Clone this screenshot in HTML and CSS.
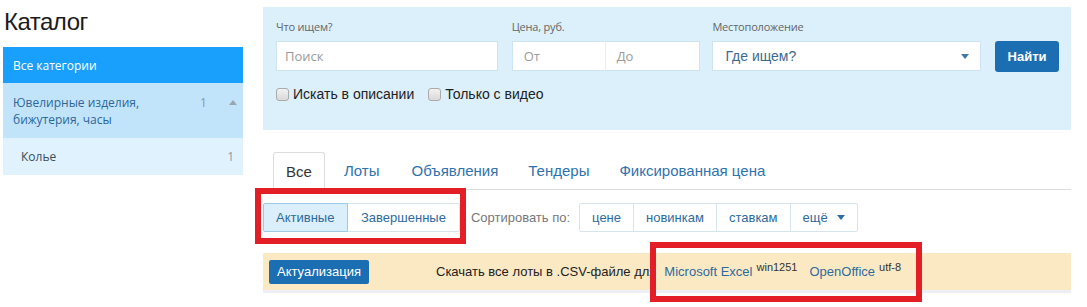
FILE: index.html
```html
<!DOCTYPE html>
<html lang="ru">
<head>
<meta charset="utf-8">
<title>Каталог</title>
<link rel="stylesheet" href="styles.css">
</head>
<body>
<div class="page">
  <aside class="sidebar">
    <h1 class="title">Каталог</h1>
    <ul class="cats">
      <li class="cat cat-all">Все категории</li>
      <li class="cat cat-parent">
        <span class="cat-name">Ювелирные изделия, бижутерия, часы</span>
        <span class="cat-count">1</span>
        <span class="cat-toggle"></span>
      </li>
      <li class="cat cat-child">
        <span class="cat-name">Колье</span>
        <span class="cat-count">1</span>
      </li>
    </ul>
  </aside>

  <main class="main">
    <form class="search">
      <div class="search-fields">
        <div class="field field-query">
          <label class="field-label">Что ищем?</label>
          <div class="input"><span class="ph">Поиск</span></div>
        </div>
        <div class="field field-price">
          <label class="field-label">Цена, руб.</label>
          <div class="price-pair">
            <div class="input"><span class="ph">От</span></div>
            <div class="input input-to"><span class="ph">До</span></div>
          </div>
        </div>
        <div class="field field-loc">
          <label class="field-label">Местоположение</label>
          <div class="input select"><span class="sel-text">Где ищем?</span><span class="caret"></span></div>
        </div>
        <div class="field field-btn">
          <button type="button" class="btn-find">Найти</button>
        </div>
      </div>
      <div class="checks">
        <label class="check"><span class="box"></span>Искать в описании</label>
        <label class="check"><span class="box"></span>Только с видео</label>
      </div>
    </form>

    <nav class="tabs">
      <span class="tab tab-active">Все</span>
      <span class="tab">Лоты</span>
      <span class="tab tab-ads">Объявления</span>
      <span class="tab">Тендеры</span>
      <span class="tab">Фиксированная цена</span>
    </nav>

    <div class="filters">
      <div class="group">
        <span class="gbtn gbtn-active">Активные</span>
        <span class="gbtn">Завершенные</span>
      </div>
      <span class="sort-label">Сортировать по:</span>
      <div class="group sort">
        <span class="gbtn">цене</span>
        <span class="gbtn">новинкам</span>
        <span class="gbtn">ставкам</span>
        <span class="gbtn">ещё <span class="caret caret-more"></span></span>
      </div>
    </div>

    <div class="csvbar">
      <button type="button" class="btn-upd">Актуализация</button>
      <span class="csv-text">Скачать все лоты в .CSV-файле для</span>
      <a class="csv-link">Microsoft Excel</a><sup class="enc">win1251</sup>
      <a class="csv-link csv-link2">OpenOffice</a><sup class="enc">utf-8</sup>
    </div>

    <div class="mark mark-filter"></div>
    <div class="mark mark-csv"></div>
  </main>
</div>
</body>
</html>
```

FILE: styles.css
```css
* { box-sizing: border-box; }
html, body { margin: 0; padding: 0; background: #fff; }
body {
  font-family: "Liberation Sans", Arial, sans-serif;
  color: #333;
  width: 1087px;
  height: 307px;
  overflow: hidden;
}
.page {
  display: flex;
  padding-left: 3px;
  gap: 20px;
}

/* sidebar */
.sidebar { width: 240px; flex: none; }
.title {
  margin: 8px 0 11px 1px;
  font: 400 24px/28px "Liberation Sans", Arial, sans-serif;
  letter-spacing: -0.5px;
  color: #1b1b1b;
}
.cats { list-style: none; margin: 0; padding: 0; font-family: "Open Sans", "Noto Sans", sans-serif; font-size: 12px; }
.cat { display: flex; align-items: center; }
.cat-all {
  height: 36px;
  background: #199ffc;
  color: #fff;
  padding-left: 10px;
}
.cat-parent {
  background: #c2e4fb;
  color: #2c6797;
  height: 55px;
  padding: 0 0 0 10px;
  align-items: flex-start;
  padding-top: 11px;
  line-height: 17px;
}
.cat-parent .cat-name { width: 150px; }
.cat-parent .cat-count { margin-left: 37px; color: #8a9aa6; }
.cat-toggle {
  margin-left: 22px;
  margin-top: 6px;
  width: 0; height: 0;
  border-left: 4px solid transparent;
  border-right: 4px solid transparent;
  border-bottom: 5px solid #9aa5ad;
}
.cat-child {
  background: #e0f2fd;
  color: #3b4d5c;
  height: 37px;
  padding-left: 18px;
}
.cat-child .cat-name { flex: 1; }
.cat-child .cat-count { margin-right: 9px; color: #8a9aa6; }

/* main */
.main { width: 808px; flex: none; position: relative; }

.search {
  margin-top: 7px;
  height: 123px;
  background: #dcf0fb;
  padding: 13px 12px 0 13px;
}
.search-fields { display: flex; align-items: flex-end; }
.field { display: flex; flex-direction: column; }
.field-label {
  font: 11px/14px "Open Sans", "Noto Sans", sans-serif;
  color: #666;
  margin-bottom: 7px;
  letter-spacing: -0.2px;
}
.input {
  height: 30px;
  background: #fff;
  border: 1px solid #cfe3ef;
  display: flex;
  align-items: center;
  padding-left: 8px;
  font: 13px "Open Sans", "Noto Sans", sans-serif;
}
.ph { color: #9a9a9a; }
.field-query { width: 222px; }
.field-price { margin-left: 14px; width: 189px; }
.price-pair { display: flex; }
.price-pair .input { width: 94px; padding-left: 11px; }
.price-pair .input-to { width: 95px; border-left: 1px solid #e3eef5; margin-left: -1px; }
.field-loc { margin-left: 12px; width: 269px; }
.select { padding-left: 12px; padding-right: 11px; justify-content: space-between; }
.sel-text { font: 14px "Liberation Sans", Arial, sans-serif; color: #3b6a90; }
.caret {
  display: inline-block;
  width: 0; height: 0;
  border-left: 4px solid transparent;
  border-right: 4px solid transparent;
  border-top: 5px solid #3f77a6;
}
.field-btn { margin-left: 14px; }
.btn-find {
  height: 31px;
  width: 64px;
  margin-bottom: -1px;
  border: 0;
  border-radius: 3px;
  background: #1b6eb1;
  color: #fff;
  font: bold 13px "Liberation Sans", Arial, sans-serif;
  padding: 0;
}

.checks { display: flex; gap: 14px; margin-top: 14px; }
.check {
  display: flex;
  align-items: center;
  font-size: 14px;
  line-height: 18px;
  color: #222;
}
.box {
  width: 13px; height: 13px;
  border: 1px solid #ababab;
  border-radius: 3px;
  background: linear-gradient(#f2f2f2, #d9d9d9);
  margin-right: 4px;
}

/* tabs */
.tabs {
  display: flex;
  margin-top: 22px;
  padding-left: 10px;
  border-bottom: 1px solid #ddd;
  height: 38px;
}
.tab {
  padding: 0 15px;
  margin-right: 0;
  font-size: 15px;
  line-height: 37px;
  color: #2f73ad;
}
.tab-ads { padding-left: 17px; }
.tab-active {
  color: #333;
  border: 1px solid #ddd;
  border-bottom-color: #fff;
  border-radius: 3px 3px 0 0;
  height: 38px;
  width: 52px;
  padding: 0;
  text-align: center;
  margin-right: 4px;
}

/* filters */
.filters {
  display: flex;
  align-items: center;
  margin-top: 13px;
  height: 29px;
}
.group { display: flex; height: 29px; }
.gbtn {
  display: flex;
  align-items: center;
  gap: 9px;
  padding: 0 12px;
  border: 1px solid #d6e4ee;
  margin-left: -1px;
  font-size: 13px;
  color: #2e6b9c;
  background: #fff;
}
.gbtn:first-child { margin-left: 0; border-radius: 2px 0 0 2px; }
.gbtn:last-child { border-radius: 0 2px 2px 0; }
.gbtn-active {
  background: #dbeefb;
  border-color: #9ccbe8;
  position: relative;
  z-index: 1;
  width: 85px;
}
.group .gbtn:nth-child(2) { padding: 0 13px; }
.sort-label { margin-left: 11px; margin-right: 9px; font-size: 13px; color: #777; }
.sort .gbtn { padding: 0 12px; }
.sort .gbtn:nth-child(2) { padding: 0 12px; }
.caret-more { border-top-color: #2c6fa8; }

/* csv bar */
.csvbar {
  margin-top: 21px;
  height: 40px;
  background: #fbe9c4;
  border-bottom: 3px solid #eeeef7;
  display: flex;
  align-items: center;
  padding-left: 6px;
  font-size: 13px;
}
.btn-upd {
  height: 24px;
  width: 100px;
  border: 0;
  border-radius: 2px;
  background: #1b6eb1;
  color: #fff;
  font: 13px "Liberation Sans", Arial, sans-serif;
  padding: 0;
}
.csv-text { margin-left: 67px; color: #222; white-space: nowrap; }
.csv-link { margin-left: 8px; color: #2e6b9c; }
.csv-link2 { margin-left: 12px; }
.enc {
  font-size: 11px;
  color: #333;
  margin-left: 4px;
  align-self: flex-start;
  margin-top: 8px;
}

/* annotation frames */
.mark {
  position: absolute;
  border: 6px solid #e31e26;
}
.mark-filter { left: -8px; top: 188px; width: 211px; height: 56px; }
.mark-csv { left: 387px; top: 242px; width: 272px; height: 60px; }
```
